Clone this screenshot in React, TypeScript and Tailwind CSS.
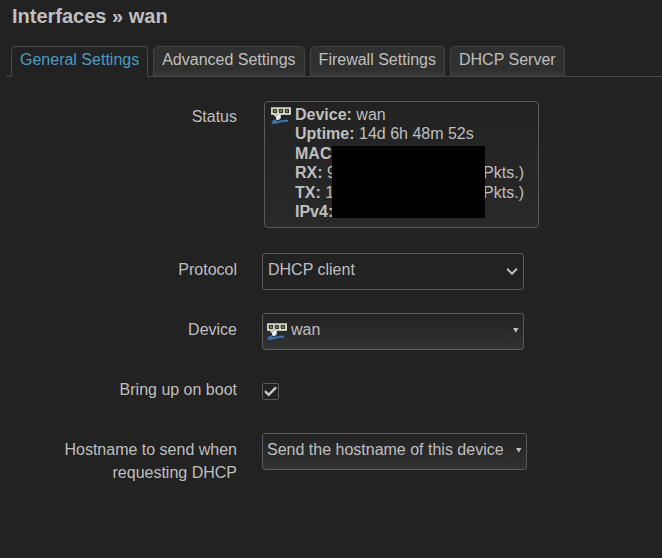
import React, { useState } from 'react';
import { clsx } from 'clsx';

interface FieldProps {
  label: string;
  htmlFor?: string;
  children: React.ReactNode;
}

const TABS = ['General Settings', 'Advanced Settings', 'Firewall Settings', 'DHCP Server'];

const SELECT_BASE = 'block h-[37px] appearance-none rounded-[3px] border border-[#5a5a5a] text-[#bfbfbf] outline-none';
const SELECT_SHADED = 'bg-linear-to-b from-[#222222] to-[#333333] pb-1';

const EthernetIcon: React.FC<{ className?: string }> = ({ className }) => (
  <svg className={className} width="20" height="20" viewBox="0 0 20 20" aria-hidden="true">
    <rect x="0" y="2" width="20" height="8" fill="#d4d4cc" />
    <rect x="0" y="2" width="20" height="1" fill="#a5a5a0" />
    <rect x="0" y="9" width="20" height="1" fill="#c4c4be" />
    {[2, 8, 14].map(x => (
      <g key={x}>
        <rect x={x} y="4" width="4" height="4" fill="#3c3b30" />
        <rect x={x + 1} y="5" width="2" height="2" fill="#8a8138" />
        <rect x={x - 1} y="4" width="1" height="3" fill="#b0b0a0" />
      </g>
    ))}
    <path d="M3 9h7v4l-2 2H5v-3l-2-1z" fill="#bfc3c6" />
    <path d="M5 12l4-3v4l-3 2z" fill="#eef0f0" />
    <path d="M5.5 15C3 15.5 0.5 17.5 2 18C5 18.8 9 15 17 16" fill="none" stroke="#284e7c" strokeWidth="2.6" />
    <path d="M5.5 15C2 16 0.5 18 3 17.9C7 17.8 11 14.8 17 15.8" fill="none" stroke="#4878b0" strokeWidth="1.4" />
  </svg>
);

const SmallArrow: React.FC = () => (
  <svg className="pointer-events-none absolute right-[5px] top-[14px]" width="6" height="6" viewBox="0 0 6 6" aria-hidden="true">
    <path d="M0 1h5.5L2.75 5.8z" fill="#bfbfbf" />
  </svg>
);

const Field: React.FC<FieldProps> = ({ label, htmlFor, children }) => (
  <div className="grid grid-cols-[237px_1fr] items-start gap-x-[25px]">
    {htmlFor ? (
      <label htmlFor={htmlFor} className="pl-10 pt-[5px] text-right leading-[23px]">{label}</label>
    ) : (
      <span className="pl-10 pt-1 text-right leading-[23px]">{label}</span>
    )}
    <div>{children}</div>
  </div>
);

const StatusBadge: React.FC = () => (
  <div className="relative ml-[2px] flex w-[275px] gap-1 rounded-[4px] border border-[#5a5a5a] bg-linear-to-b from-[#222222] to-[#292929] px-[6px] pb-[6px] pt-[3px]">
    <EthernetIcon className="shrink-0" />
    <div className="flex w-[229px] flex-col gap-px leading-[19px]">
      <div>
        <p><b>Device:</b> wan</p>
        <p><b>Uptime:</b> 14d 6h 48m 52s</p>
      </div>
      <div>
        <p><b>MAC:</b></p>
        <p className="flex justify-between"><span><b>RX:</b> 9</span><span>Pkts.)</span></p>
      </div>
      <div>
        <p className="flex justify-between"><span><b>TX:</b> 1</span><span>Pkts.)</span></p>
        <p><b>IPv4:</b></p>
      </div>
    </div>
    {/* hides the private values */}
    <div className="absolute left-[67px] top-11 h-[72px] w-[153px] bg-black" />
  </div>
);

const App: React.FC = () => {
  const [activeTab, setActiveTab] = useState(TABS[0]);
  const [onBoot, setOnBoot] = useState(true);

  return (
    <main className="min-h-screen bg-[#222222] pl-[6px] font-['Liberation_Sans',Arial,sans-serif] text-base text-[#bfbfbf]">
      <h1 className="pl-[6px] pt-1 text-[20px] font-bold leading-6">Interfaces » wan</h1>

      <div role="tablist" className="mt-[18px] flex gap-[5px] border-b border-[#4a4a4a] pl-[5px]">
        {TABS.map(tab => (
          <button
            key={tab}
            type="button"
            role="tab"
            aria-selected={tab === activeTab}
            onClick={() => setActiveTab(tab)}
            className={clsx(
              '-mb-px h-[31px] whitespace-nowrap rounded-t-[5px] border px-2 pb-[5px] leading-[23px]',
              tab === activeTab
                ? 'border-[#4a4a4a] border-b-[#222222] bg-[#222222] text-[#4a9cc0]'
                : 'border-[#444444] bg-linear-to-b from-[#303030] from-0% via-[#303030] via-80% to-[#3c3c3c]'
            )}
          >
            {tab}
          </button>
        ))}
      </div>

      <form className="-ml-[6px] pt-6" onSubmit={e => e.preventDefault()}>
        <div className="flex flex-col gap-[23px]">
          <div className="pb-[2px]">
            <Field label="Status">
              <StatusBadge />
            </Field>
          </div>

          <Field label="Protocol" htmlFor="protocol">
            <div className="relative w-[262px]">
              <select id="protocol" className={clsx(SELECT_BASE, 'w-full bg-[#222222] pb-1 pl-[5px]')}>
                <option>DHCP client</option>
              </select>
              <svg className="pointer-events-none absolute right-[6px] top-[14px]" width="12" height="9" viewBox="0 0 12 9" aria-hidden="true">
                <path d="M1.2 1.8L6 6.8l4.8-5" fill="none" stroke="#bfbfbf" strokeWidth="2" />
              </svg>
            </div>
          </Field>

          <Field label="Device" htmlFor="device">
            <div className="relative w-[262px]">
              <select id="device" className={clsx(SELECT_BASE, SELECT_SHADED, 'w-full pl-7')}>
                <option>wan</option>
              </select>
              <EthernetIcon className="pointer-events-none absolute left-[5px] top-2" />
              <SmallArrow />
            </div>
          </Field>

          <Field label="Bring up on boot" htmlFor="boot">
            <div className="flex h-[37px] items-center">
              <div className="relative">
                <input
                  id="boot"
                  type="checkbox"
                  checked={onBoot}
                  onChange={e => setOnBoot(e.target.checked)}
                  className="peer block size-[17px] appearance-none rounded-[2px] border border-[#5a5a5a] bg-[#222222]"
                />
                <svg className="pointer-events-none absolute left-[2px] top-[3px] hidden peer-checked:block" width="13" height="11" viewBox="0 0 13 11" aria-hidden="true">
                  <path d="M1 5.2l3.7 3.6L12 1.4" fill="none" stroke="#c8c8c8" strokeWidth="2.4" />
                </svg>
              </div>
            </div>
          </Field>

          <Field label="Hostname to send when requesting DHCP" htmlFor="hostname">
            <div className="relative w-[265px]">
              <select id="hostname" className={clsx(SELECT_BASE, SELECT_SHADED, 'w-full pl-1')}>
                <option>Send the hostname of this device</option>
              </select>
              <SmallArrow />
            </div>
          </Field>
        </div>
      </form>
    </main>
  );
};

export default App;
